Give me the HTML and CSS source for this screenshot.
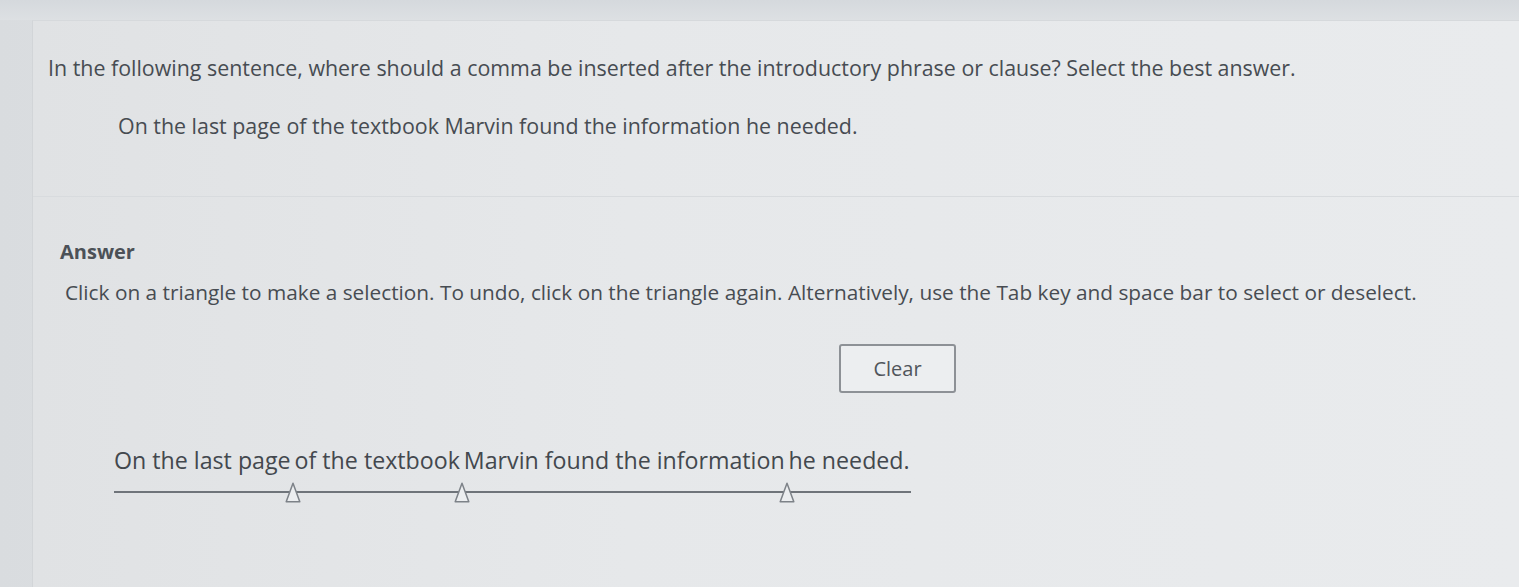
FILE: index.html
```html
<!DOCTYPE html>
<html>
<head>
<meta charset="utf-8">
<link rel="stylesheet" href="styles.css">
</head>
<body>
<div class="topstrip"></div>
<div class="card">
  <div class="question">
    <p class="prompt">In the following sentence, where should a comma be inserted after the introductory phrase or clause? Select the best answer.</p>
    <p class="quote">On the last page of the textbook Marvin found the information he needed.</p>
  </div>
  <div class="answer">
    <h3 class="answer-title">Answer</h3>
    <p class="instructions">Click on a triangle to make a selection. To undo, click on the triangle again. Alternatively, use the Tab key and space bar to select or deselect.</p>
    <div class="clear-row"><button class="clear-btn">Clear</button></div>
    <div class="sentence">
      <span class="seg">On the last page</span>
      <span class="slot"><svg class="tri" viewBox="0 0 16 21" width="16" height="21"><path d="M8 1.2 L14.8 19.8 L1.2 19.8 Z" fill="#eceef0" stroke="#7d8288" stroke-width="1.5" stroke-linejoin="round"/></svg></span>
      <span class="seg">of the textbook</span>
      <span class="slot"><svg class="tri" viewBox="0 0 16 21" width="16" height="21"><path d="M8 1.2 L14.8 19.8 L1.2 19.8 Z" fill="#eceef0" stroke="#7d8288" stroke-width="1.5" stroke-linejoin="round"/></svg></span>
      <span class="seg">Marvin found the information</span>
      <span class="slot"><svg class="tri" viewBox="0 0 16 21" width="16" height="21"><path d="M8 1.2 L14.8 19.8 L1.2 19.8 Z" fill="#eceef0" stroke="#7d8288" stroke-width="1.5" stroke-linejoin="round"/></svg></span>
      <span class="seg">he needed.</span>
    </div>
  </div>
</div>
</body>
</html>
```
FILE: styles.css
```css
html, body {
  margin: 0;
  padding: 0;
}
body {
  width: 1519px;
  height: 587px;
  overflow: hidden;
  background: linear-gradient(90deg, #d9dcdf 0%, #e1e4e7 30%, #e4e7ea 100%);
  font-family: "Open Sans", "Liberation Sans", sans-serif;
  color: #474c52;
}
.topstrip {
  height: 20px;
  background: linear-gradient(180deg, #d5d9dd, #dde0e3);
}
.card {
  margin-left: 32px;
  height: 567px;
  box-sizing: border-box;
  background: linear-gradient(90deg, #e0e2e4 0%, #e6e8ea 40%, #e9ebed 100%);
  border-left: 1px solid #d2d5d8;
  border-top: 1px solid #d6d9dc;
  padding-left: 15px;
}
.question {
  padding-top: 33px;
  padding-bottom: 56px;
  border-bottom: 1px solid #d8dbde;
  margin-left: -15px;
  padding-left: 15px;
}
.prompt {
  margin: 0;
  font-size: 21.4px;
  line-height: 28px;
}
.quote {
  margin: 30px 0 0 70px;
  font-size: 21.4px;
  line-height: 28px;
}
.answer {
  padding-left: 12px;
}
.answer-title {
  margin: 42px 0 0 0;
  font-size: 20px;
  font-weight: 700;
  line-height: 26px;
  color: #4c5157;
}
.instructions {
  margin: 14px 0 0 5px;
  font-size: 20.8px;
  line-height: 26px;
}
.clear-row {
  display: flex;
  margin-top: 39px;
  padding-left: 779px;
}
.clear-btn {
  width: 117px;
  height: 49px;
  font-family: "Open Sans", "Liberation Sans", sans-serif;
  font-size: 20px;
  color: #50555b;
  background: #eceef0;
  border: 2px solid #8d9196;
  border-radius: 3px;
}
.sentence {
  display: flex;
  align-items: stretch;
  width: 797px;
  margin: 52px 0 0 54px;
  border-bottom: 2px solid #6f747a;
  height: 46px;
  font-size: 23.2px;
  line-height: 30px;
  color: #43484e;
}
.seg {
  white-space: nowrap;
}
.slot {
  width: 4px;
  display: flex;
  flex-direction: column;
  justify-content: flex-end;
  align-items: center;
  margin-bottom: -12px;
}
.tri {
  flex: none;
}
```
